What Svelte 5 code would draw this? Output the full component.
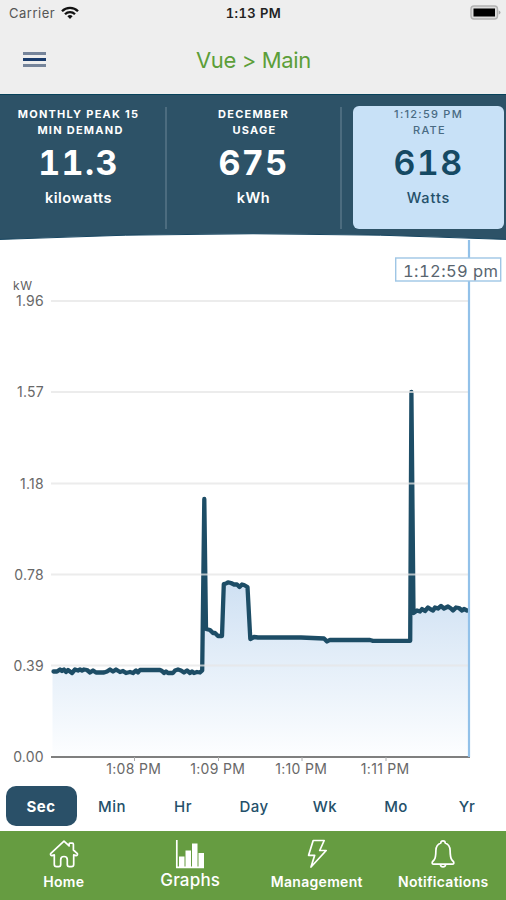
<script lang="ts">
  const stats = [
    { label: ['Monthly peak 15', 'min demand'], value: '11.3', unit: 'kilowatts' },
    { label: ['December', 'usage'], value: '675', unit: 'kWh' },
    { label: ['1:12:59 PM', 'rate'], value: '618', unit: 'Watts', active: true }
  ];

  const ranges = ['Sec', 'Min', 'Hr', 'Day', 'Wk', 'Mo', 'Yr'];
  let range = $state('Sec');

  const tabs = ['Home', 'Graphs', 'Management', 'Notifications'];
  let tab = $state('Graphs');

  // Chart geometry, in svg units
  const LEFT = 51;
  const RIGHT = 469;
  const BASE = 517;
  const yTicks = [
    { y: 61, label: '1.96' },
    { y: 152, label: '1.57' },
    { y: 243.5, label: '1.18' },
    { y: 334.5, label: '0.78' },
    { y: 425.5, label: '0.39' },
    { y: BASE, label: '0.00' }
  ];
  const xTicks = [
    { x: 134.5, label: '1:08 PM' },
    { x: 218.5, label: '1:09 PM' },
    { x: 302, label: '1:10 PM' },
    { x: 386, label: '1:11 PM' }
  ];

  const points = [
    [53.5, 431.5], [57, 431.5], [60, 429.5], [62, 431], [64, 429.5], [66, 432], [68, 430], [70, 431.5],
    [72, 433], [75, 429.5], [78, 430.5], [80, 429.5], [82, 430.5], [84, 429.5], [87, 430], [90, 432.5],
    [93, 430.5], [96, 432.5], [104, 432.5], [107, 431.5], [110, 429.5], [113, 431.5], [116, 429.5],
    [120, 432], [123, 431], [126, 433], [130, 432], [133, 433], [136, 430.5], [138, 432.5],
    [140, 430], [160, 430], [162, 431], [164, 433], [166, 431.5], [168, 433], [173, 433], [175, 430.5],
    [178, 429.5], [181, 430.5], [184, 432.5], [187, 430.5], [190, 433], [192, 431.5], [194, 433],
    [197, 432], [200, 432.5], [202.2, 430.5], [204.3, 259], [206, 389],
    [210, 390], [213, 393], [215, 393], [218, 396], [222, 396], [223.8, 344], [226, 343.5],
    [228, 342.3], [231, 343], [234, 344.5], [237, 344.5], [239.5, 347], [242, 344.5], [244, 345],
    [247.5, 347], [250.3, 399], [254, 397], [258, 397.5], [301, 397.5], [324, 398.5], [327, 401.5],
    [330, 399.8], [370, 400], [373, 400.8], [410.2, 400.8], [411.4, 152], [413.5, 373], [417, 370.5],
    [420, 371.5], [422, 369], [425, 371], [428, 367.5], [431, 369.5], [433, 370.5], [435, 367.5],
    [438, 368.5], [441, 366], [444, 368.5], [448, 366.5], [451, 368.5], [453, 370.5], [456, 367.5],
    [459, 368], [462, 370.5], [464, 369], [467, 370.5]
  ];
  const line = points.map(([x, y]) => `${x},${y}`).join(' ');
  const area = `52.5,${BASE} 52.5,431 ${line} ${RIGHT},370 ${RIGHT},${BASE}`;
</script>

<div class="app">
  <div class="statusbar">
    <div class="carrier">
      <span>Carrier</span>
      <svg width="18" height="14" viewBox="0 0 18 14" fill="none" stroke="#111" stroke-width="2.3">
        <path d="M1 5.2a11.2 11.2 0 0 1 16 0" />
        <path d="M4 8.2a7 7 0 0 1 10 0" />
        <path d="M9 13 6.4 10.3a3.6 3.6 0 0 1 5.2 0z" fill="#111" stroke="none" />
      </svg>
    </div>
    <span class="clock">1:13 PM</span>
    <svg class="battery" width="31" height="16" viewBox="0 0 31 16">
      <rect x="1" y="1" width="26.5" height="13" rx="3" fill="#ddd" stroke="#b2b2b2" stroke-width="1.4" />
      <rect x="3.5" y="3.5" width="21.5" height="8" fill="#000" />
      <path d="M28.7 5.5q1.8.6 1.8 2t-1.8 2z" fill="#aaa" />
    </svg>
  </div>

  <header>
    <button class="menu" aria-label="Menu"><i></i><i></i><i></i></button>
    <h1>Vue &gt; Main</h1>
  </header>

  <section class="stats">
    {#each stats as s}
      <div class="stat" class:active={s.active}>
        <div class="label">
          {#each s.label as row}<span>{row}</span>{/each}
        </div>
        <div class="value">{s.value}</div>
        <div class="unit">{s.unit}</div>
      </div>
    {/each}
  </section>

  <svg class="chart" width="506" height="547" viewBox="0 -7 506 547">
    <defs>
      <linearGradient id="fill" gradientUnits="userSpaceOnUse" x1="0" y1="335" x2="0" y2={BASE}>
        <stop offset="0" stop-color="#cddff2" />
        <stop offset="0.5" stop-color="#e5eff9" />
        <stop offset="1" stop-color="#fdfeff" />
      </linearGradient>
    </defs>
    <path class="curve" d="M-2-9H508V-.5Q253-12-2-.5Z" />

    <polygon points={area} fill="url(#fill)" />
    <polyline class="line" points={line} />
    {#each yTicks as t}
      {#if t.y !== BASE}<line class="grid" x1={LEFT} x2={RIGHT} y1={t.y} y2={t.y} />{/if}
      <text class="tick" x="43.8" y={t.y + 5} text-anchor="end">{t.label}</text>
    {/each}
    <text class="kw" x="13" y="50">kW</text>

    <line class="axis" x1={LEFT} x2={RIGHT + 1} y1={BASE} y2={BASE} />
    {#each xTicks as t}
      <line class="mark" x1={t.x} x2={t.x} y1={BASE} y2={BASE + 4} />
      <text class="tick time" x={t.x - 0.8} y="534" text-anchor="middle">{t.label}</text>
    {/each}

    <line class="cursor" x1={RIGHT} x2={RIGHT} y1="0" y2={BASE} />
    <rect class="tip" x="395.7" y="18" width="105" height="23" />
    <text class="tiptext" x="403" y="36.5">1:12:59 pm</text>
  </svg>

  <div class="ranges">
    {#each ranges as r}
      <button class:selected={range === r} onclick={() => (range = r)}>{r}</button>
    {/each}
  </div>

  <nav>
    {#each tabs as t}
      <button class:current={tab === t} onclick={() => (tab = t)}>
        <svg width="32" height="30" viewBox="0 0 32 30">
          {#if t === 'Home'}
            <path d="M16 2.2 2.6 14.6q-.4 1.8 1.4 2l2.3-.7v9.6q0 2.2 2.2 2.2h2.2q2 0 2-2.2v-4.8q0-3.2 3.3-3.2t3.3 3.2v4.8q0 2.2 2 2.2h2.2q2.2 0 2.2-2.2v-9.6l2.3.7q1.8-.2 1.4-2L25.4 11V5.2q0-1-1-1h-2.3q-1 0-1 1v1.7z" />
          {:else if t === 'Graphs'}
            <path d="M2.8 1v27.4H30" />
            <path class="solid" d="M5 17.5h5.5V29H5zM11.5 11.5H17V29h-5.500zM18 4.5h5.500V29H18zM24.500 14H30v15h-5.500z" />
          {:else if t === 'Management'}
            <path d="M12.2 1.500h11L18.700 11.500h6.500L10 28l3.700-11.700H7.600z" />
          {:else}
            <path d="M13.8 4q0-2.2 2.2-2.2T18.2 4q4.7 1.6 4.9 7.4.1 7 1.6 9.2l1.9 2.3q.8 2.2-1.2 2.2H6.6q-2 0-1.2-2.2l1.9-2.3q1.5-2.200 1.600-9.200Q9.100 5.600 13.800 4zM13.300 25.300q.5 2.600 2.700 2.600t2.700-2.600" />
          {/if}
        </svg>
        <span>{t}</span>
      </button>
    {/each}
  </nav>
</div>

<style>
  :global(body) {
    background: #fff;
  }
  .app {
    width: 506px;
    height: 900px;
    overflow: hidden;
    display: flex;
    flex-direction: column;
    font-family: Inter, 'Liberation Sans', sans-serif;
    color: #24506a;
  }
  button {
    border: 0;
    padding: 0;
    background: none;
    font: inherit;
    color: inherit;
  }

  .statusbar {
    display: grid;
    grid-template-columns: 1fr auto 1fr;
    align-items: center;
    height: 26px;
    padding: 0 5px 0 9px;
    background: #eee;
    color: #222;
    font-size: 13px;
  }
  .carrier {
    display: flex;
    align-items: center;
    gap: 6px;
    color: #555;
    letter-spacing: 0.5px;
  }
  .clock {
    padding-right: 3px;
    font-weight: 600;
    letter-spacing: 0.4px;
    font-variant-numeric: tabular-nums;
  }
  .battery {
    justify-self: end;
  }

  header {
    display: grid;
    grid-template-columns: 1fr auto 1fr;
    align-items: center;
    height: 68px;
    padding: 0 0 0 23px;
    background: #eee;
  }
  .menu {
    display: flex;
    flex-direction: column;
    gap: 3.5px;
    width: 23px;
    margin-bottom: 1px;
  }
  .menu i {
    height: 2.7px;
    background: #75849a;
  }
  .menu i:nth-child(2) {
    background: #193b6b;
  }
  h1 {
    margin: 0 22px 0 0;
    font-size: 22px;
    font-weight: 400;
    letter-spacing: -0.35px;
    color: #5c9e38;
  }

  .stats {
    display: grid;
    grid-template-columns: 167px 175px 164px;
    box-sizing: border-box;
    height: 139px;
    padding-top: 12px;
    background: #2d5267;
    border-top: 1px solid #07425a;
    color: #fff;
    text-align: center;
  }
  .stat {
    box-sizing: border-box;
    height: 122px;
    border-right: 2px solid #4c6c7f;
  }
  .stat:first-child {
    padding-right: 8px;
  }
  .stat.active {
    margin: -1px 2px 0 11px;
    height: 123px;
    border: 0;
    padding-top: 1px;
    border-radius: 6px;
    background: #c8e1f7;
    color: #24506a;
  }
  .label {
    display: flex;
    flex-direction: column;
    font-size: 11px;
    font-weight: 700;
    line-height: 15.5px;
    letter-spacing: 1.25px;
    text-transform: uppercase;
  }
  .label span + span {
    padding-left: 2px;
  }
  .stat:first-child .label span + span {
    padding-left: 4px;
  }
  .active .label {
    font-weight: 500;
    color: #496b83;
  }
  .value {
    margin-top: 3.5px;
    font-size: 34px;
    font-weight: 700;
    line-height: 42px;
    letter-spacing: 1.4px;
    font-variant-numeric: tabular-nums;
  }
  .active .value {
    font-weight: 600;
    color: #154963;
  }
  .unit {
    margin-top: 4px;
    font-size: 14.5px;
    font-weight: 600;
    line-height: 20px;
    letter-spacing: 0.5px;
  }
  .active .unit {
    font-weight: 500;
    letter-spacing: 0.9px;
  }

  .chart {
    display: block;
    flex: none;
  }
  .curve {
    fill: #2d5267;
    stroke: #174661;
    stroke-width: 1;
  }
  .line {
    fill: none;
    stroke: #1d4d66;
    stroke-width: 4.3;
    stroke-linejoin: round;
    stroke-linecap: round;
  }
  .grid {
    stroke: #e6e6e6;
    stroke-opacity: 0.75;
    stroke-width: 2;
  }
  .axis {
    stroke: #555;
    stroke-width: 1.6;
  }
  .mark {
    stroke: #aaa;
  }
  .tick {
    font-size: 14px;
    letter-spacing: 0.2px;
    fill: #686868;
  }
  .time {
    letter-spacing: 0.3px;
  }
  .kw {
    font-size: 12px;
    letter-spacing: 0.7px;
    fill: #606060;
  }
  .cursor {
    stroke: #92c1e9;
    stroke-width: 2.2;
  }
  .tip {
    fill: #fff;
    stroke: #9fc6e5;
    stroke-width: 1.4;
  }
  .tiptext {
    font-size: 16.5px;
    letter-spacing: 0.4px;
    font-variant-numeric: tabular-nums;
    fill: #59656f;
  }

  .ranges {
    display: grid;
    grid-template-columns: repeat(7, 71px);
    align-items: center;
    flex: none;
    height: 51px;
    padding-left: 5.5px;
  }
  .ranges button {
    height: 40px;
    padding-top: 2px;
    border-radius: 10px;
    font-size: 15px;
    font-weight: 500;
    letter-spacing: 0.5px;
  }
  .ranges .selected {
    background: #2a5068;
    color: #fff;
    font-weight: 700;
  }

  nav {
    display: grid;
    grid-template-columns: repeat(4, 1fr);
    flex: none;
    height: 69px;
    background: #669c41;
    color: #fff;
  }
  nav button {
    display: flex;
    flex-direction: column;
    align-items: center;
    padding: 8px 0 0 1px;
    font-size: 14px;
    font-weight: 600;
    letter-spacing: 0.3px;
  }
  nav span {
    margin-top: 4px;
    line-height: 18px;
  }
  nav .current {
    font-size: 17px;
    font-weight: 500;
    letter-spacing: 0.2px;
  }
  nav .current span {
    margin-top: 2px;
  }
  nav svg {
    fill: none;
    stroke: #fff;
    stroke-width: 1.7;
    stroke-linejoin: round;
  }
  nav .solid {
    fill: #fff;
    stroke: none;
  }
</style>
